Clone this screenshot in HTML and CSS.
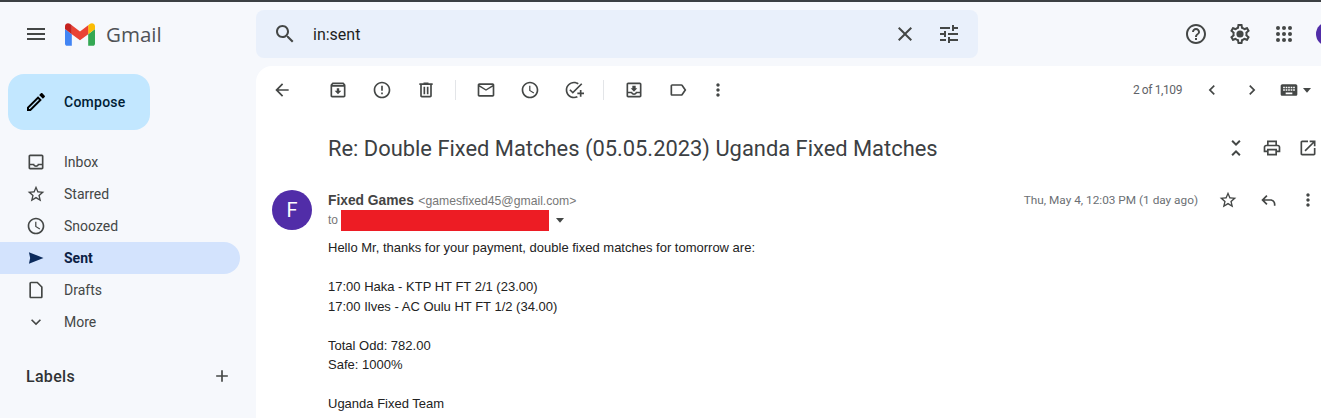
FILE: index.html
```html
<!DOCTYPE html>
<html lang="en">
    <head>
        <meta charset="UTF-8" />
        <meta name="viewport" content="width=device-width, initial-scale=1.0" />
        <title>Gmail</title>
        <link rel="stylesheet" href="styles.css">
    </head>
    <body>
        <svg class="sprite">
            <symbol id="i-menu" viewBox="0 0 24 24"><path d="M3 18h18v-2H3v2zm0-5h18v-2H3v2zm0-7v2h18V6H3z"/></symbol>
            <symbol id="i-search" viewBox="0 0 24 24"><path d="M15.5 14h-.79l-.28-.27C15.41 12.59 16 11.11 16 9.5 16 5.91 13.09 3 9.5 3S3 5.91 3 9.5 5.91 16 9.5 16c1.61 0 3.09-.59 4.23-1.57l.27.28v.79l5 4.99L20.49 19l-4.99-5zm-6 0C7.01 14 5 11.99 5 9.5S7.01 5 9.5 5 14 7.01 14 9.5 11.99 14 9.5 14z"/></symbol>
            <symbol id="i-close" viewBox="0 0 24 24"><path d="M19 6.41L17.59 5 12 10.59 6.41 5 5 6.41 10.59 12 5 17.59 6.41 19 12 13.41 17.59 19 19 17.59 13.41 12z"/></symbol>
            <symbol id="i-tune" viewBox="0 0 24 24"><path d="M3 17v2h6v-2H3zM3 5v2h10V5H3zm10 16v-2h8v-2h-8v-2h-2v6h2zM7 9v2H3v2h4v2h2V9H7zm14 4v-2H11v2h10zm-6-4h2V7h4V5h-4V3h-2v6z"/></symbol>
            <symbol id="i-help" viewBox="0 0 24 24"><path d="M11 18h2v-2h-2v2zm1-16C6.48 2 2 6.48 2 12s4.48 10 10 10 10-4.48 10-10S17.52 2 12 2zm0 18c-4.41 0-8-3.59-8-8s3.59-8 8-8 8 3.59 8 8-3.59 8-8 8zm0-14c-2.21 0-4 1.79-4 4h2c0-1.1.9-2 2-2s2 .9 2 2c0 2-3 1.75-3 5h2c0-2.25 3-2.5 3-5 0-2.21-1.79-4-4-4z"/></symbol>
            <symbol id="i-settings" viewBox="0 0 24 24"><path d="M19.43 12.98c.04-.32.07-.64.07-.98 0-.34-.03-.66-.07-.98l2.11-1.65c.19-.15.24-.42.12-.64l-2-3.46c-.09-.16-.26-.25-.44-.25-.06 0-.12.01-.17.03l-2.49 1c-.52-.4-1.08-.73-1.69-.98l-.38-2.65C14.46 2.18 14.25 2 14 2h-4c-.25 0-.46.18-.49.42l-.38 2.65c-.61.25-1.17.59-1.69.98l-2.49-1c-.06-.02-.12-.03-.18-.03-.17 0-.34.09-.43.25l-2 3.46c-.13.22-.07.49.12.64l2.11 1.65c-.04.32-.07.65-.07.98 0 .33.03.66.07.98l-2.11 1.65c-.19.15-.24.42-.12.64l2 3.46c.09.16.26.25.44.25.06 0 .12-.01.17-.03l2.49-1c.52.4 1.08.73 1.69.98l.38 2.65c.03.24.24.42.49.42h4c.25 0 .46-.18.49-.42l.38-2.65c.61-.25 1.17-.59 1.69-.98l2.49 1c.06.02.12.03.18.03.17 0 .34-.09.43-.25l2-3.46c.12-.22.07-.49-.12-.64l-2.11-1.65zm-1.98-1.71c.04.31.05.52.05.73 0 .21-.02.43-.05.73l-.14 1.13.89.7 1.08.84-.7 1.21-1.27-.51-1.04-.42-.9.68c-.43.32-.84.56-1.25.73l-1.06.43-.16 1.13-.2 1.35h-1.4l-.19-1.35-.16-1.13-1.06-.43c-.43-.18-.83-.41-1.23-.71l-.91-.7-1.06.43-1.27.51-.7-1.21 1.08-.84.89-.7-.14-1.13c-.03-.31-.05-.54-.05-.74s.02-.43.05-.73l.14-1.13-.89-.7-1.08-.84.7-1.21 1.27.51 1.04.42.9-.68c.43-.32.84-.56 1.25-.73l1.06-.43.16-1.13.2-1.35h1.39l.19 1.35.16 1.13 1.06.43c.43.18.83.41 1.23.71l.91.7 1.06-.43 1.27-.51.7 1.21-1.07.85-.89.7.14 1.13z"/><circle cx="12" cy="12" r="3.6"/></symbol>
            <symbol id="i-apps" viewBox="0 0 24 24"><circle cx="6" cy="6" r="2"/><circle cx="12" cy="6" r="2"/><circle cx="18" cy="6" r="2"/><circle cx="6" cy="12" r="2"/><circle cx="12" cy="12" r="2"/><circle cx="18" cy="12" r="2"/><circle cx="6" cy="18" r="2"/><circle cx="12" cy="18" r="2"/><circle cx="18" cy="18" r="2"/></symbol>
            <symbol id="i-edit" viewBox="0 0 24 24"><path d="M3 17.25V21h3.75L17.81 9.94l-3.75-3.75L3 17.25zM5.92 19H5v-.92l9.06-9.06.92.92L5.92 19zM20.71 7.04c.39-.39.39-1.02 0-1.41l-2.34-2.34c-.2-.2-.45-.29-.71-.29s-.51.09-.7.28l-1.83 1.83 3.75 3.75 1.83-1.82z"/></symbol>
            <symbol id="i-inbox" viewBox="0 0 24 24"><path d="M19 3H5c-1.1 0-2 .9-2 2v14c0 1.1.9 2 2 2h14c1.1 0 2-.9 2-2V5c0-1.1-.9-2-2-2zm0 16H5v-3h3.56c.69 1.19 1.97 2 3.45 2s2.75-.81 3.45-2H19v3zm0-5h-4.99c0 1.1-.9 2-2 2s-2-.9-2-2H5V5h14v9z"/></symbol>
            <symbol id="i-star" viewBox="0 0 24 24"><path d="M22 9.24l-7.19-.62L12 2 9.19 8.63 2 9.24l5.46 4.73L5.82 21 12 17.27 18.18 21l-1.63-7.03L22 9.24zM12 15.4l-3.76 2.27 1-4.28-3.32-2.88 4.38-.38L12 6.1l1.71 4.04 4.38.38-3.32 2.88 1 4.28L12 15.4z"/></symbol>
            <symbol id="i-clock" viewBox="0 0 24 24"><path d="M11.99 2C6.47 2 2 6.48 2 12s4.47 10 9.99 10C17.52 22 22 17.52 22 12S17.52 2 11.99 2zM12 20c-4.42 0-8-3.58-8-8s3.58-8 8-8 8 3.58 8 8-3.58 8-8 8zm.5-13H11v6l5.25 3.15.75-1.23-4.5-2.67z"/></symbol>
            <symbol id="i-send" viewBox="0 0 24 24"><path d="M3.5 19L21 12 3.5 5l1.5 7z"/></symbol>
            <symbol id="i-draft" viewBox="0 0 24 24"><path d="M14 2H6c-1.1 0-2 .9-2 2v16c0 1.1.9 2 2 2h12c1.1 0 2-.9 2-2V8l-6-6zm4 18H6V4h7.17L18 8.83V20z"/></symbol>
            <symbol id="i-down" viewBox="0 0 24 24"><path d="M16.59 8.59L12 13.17 7.41 8.59 6 10l6 6 6-6z"/></symbol>
            <symbol id="i-add" viewBox="0 0 24 24"><path d="M19 13h-6v6h-2v-6H5v-2h6V5h2v6h6v2z"/></symbol>
            <symbol id="i-back" viewBox="0 0 24 24"><path d="M20 11H7.83l5.59-5.59L12 4l-8 8 8 8 1.41-1.41L7.83 13H20v-2z"/></symbol>
            <symbol id="i-archive" viewBox="0 0 24 24"><path d="M20.54 5.23l-1.39-1.68C18.88 3.21 18.47 3 18 3H6c-.47 0-.88.21-1.16.55L3.46 5.23C3.17 5.57 3 6.02 3 6.5V19c0 1.1.9 2 2 2h14c1.1 0 2-.9 2-2V6.5c0-.48-.17-.93-.46-1.27zM6.24 5h11.52l.81.97H5.44l.8-.97zM5 19V8h14v11H5zm8.45-9h-2.9v3H8l4 4 4-4h-2.55z"/></symbol>
            <symbol id="i-report" viewBox="0 0 24 24"><path d="M11 15h2v2h-2zm0-8h2v6h-2zm.99-5C6.47 2 2 6.48 2 12s4.47 10 9.99 10C17.52 22 22 17.52 22 12S17.52 2 11.99 2zM12 20c-4.42 0-8-3.58-8-8s3.58-8 8-8 8 3.58 8 8-3.58 8-8 8z"/></symbol>
            <symbol id="i-delete" viewBox="0 0 24 24"><path d="M15 4V3H9v1H4v2h1v13c0 1.1.9 2 2 2h10c1.1 0 2-.9 2-2V6h1V4h-5zm2 15H7V6h10v13zM9 8h2v9H9zm4 0h2v9h-2z"/></symbol>
            <symbol id="i-mail" viewBox="0 0 24 24"><path d="M20 4H4c-1.1 0-2 .9-2 2v12c0 1.1.9 2 2 2h16c1.1 0 2-.9 2-2V6c0-1.1-.9-2-2-2zm0 14H4V8l8 5 8-5v10zm-8-7L4 6h16l-8 5z"/></symbol>
            <symbol id="i-task" viewBox="0 0 24 24"><path d="M22 5.18L10.59 16.6l-4.24-4.24 1.41-1.41 2.83 2.83 10-10L22 5.18zM12 20c-4.41 0-8-3.59-8-8s3.59-8 8-8c1.57 0 3.04.46 4.28 1.25l1.45-1.45C16.1 2.67 14.13 2 12 2 6.48 2 2 6.48 2 12s4.48 10 10 10c1.73 0 3.36-.44 4.78-1.22l-1.5-1.5c-1 .46-2.11.72-3.28.72zm7-5h-3v2h3v3h2v-3h3v-2h-3v-3h-2v3z"/></symbol>
            <symbol id="i-move" viewBox="0 0 24 24"><path d="M19 3H4.99c-1.11 0-1.98.9-1.98 2L3 19c0 1.1.88 2 1.99 2H19c1.1 0 2-.9 2-2V5c0-1.1-.9-2-2-2zm0 16H5v-3h3.56c.69 1.19 1.97 2 3.45 2s2.75-.81 3.45-2H19v3zm0-5h-4.99c0 1.1-.9 2-2 2s-2-.9-2-2H5V5h14v9zm-3-4h-2V7h-4v3H8l4 4 4-4z"/></symbol>
            <symbol id="i-label" viewBox="0 0 24 24"><path d="M17.63 5.84C17.27 5.33 16.67 5 16 5L5 5.01C3.9 5.01 3 5.9 3 7v10c0 1.1.9 1.99 2 1.99L16 19c.67 0 1.27-.33 1.63-.84L22 12l-4.37-6.16zM16 17H5V7h11l3.55 5L16 17z"/></symbol>
            <symbol id="i-more" viewBox="0 0 24 24"><path d="M12 8c1.1 0 2-.9 2-2s-.9-2-2-2-2 .9-2 2 .9 2 2 2zm0 2c-1.1 0-2 .9-2 2s.9 2 2 2 2-.9 2-2-.9-2-2-2zm0 6c-1.1 0-2 .9-2 2s.9 2 2 2 2-.9 2-2-.9-2-2-2z"/></symbol>
            <symbol id="i-prev" viewBox="0 0 24 24"><path d="M15.41 7.41L14 6l-6 6 6 6 1.41-1.41L10.83 12z"/></symbol>
            <symbol id="i-next" viewBox="0 0 24 24"><path d="M10 6L8.59 7.41 13.17 12l-4.58 4.59L10 18l6-6z"/></symbol>
            <symbol id="i-keyboard" viewBox="0 0 24 24"><path d="M20 5H4c-1.1 0-2 .9-2 2v10c0 1.1.9 2 2 2h16c1.1 0 2-.9 2-2V7c0-1.1-.9-2-2-2zm-9 3h2v2h-2V8zm0 3h2v2h-2v-2zM8 8h2v2H8V8zm0 3h2v2H8v-2zm-1 2H5v-2h2v2zm0-3H5V8h2v2zm9 7H8v-2h8v2zm0-4h-2v-2h2v2zm0-3h-2V8h2v2zm3 3h-2v-2h2v2zm0-3h-2V8h2v2z"/></symbol>
            <symbol id="i-caret" viewBox="0 0 24 24"><path d="M6 9h12l-6 7z"/></symbol>
            <symbol id="i-unfold" viewBox="0 0 24 24"><path d="M7.41 18.59L8.83 20 12 16.83 15.17 20l1.41-1.41L12 14l-4.59 4.59zm9.18-13.18L15.17 4 12 7.17 8.83 4 7.41 5.41 12 10l4.59-4.59z"/></symbol>
            <symbol id="i-print" viewBox="0 0 24 24"><path d="M19 8h-1V3H6v5H5c-1.66 0-3 1.34-3 3v6h4v4h12v-4h4v-6c0-1.66-1.34-3-3-3zM8 5h8v3H8V5zm8 12v2H8v-4h8v2zm2-2v-2H6v2H4v-4c0-.55.45-1 1-1h14c.55 0 1 .45 1 1v4h-2z"/></symbol>
            <symbol id="i-open" viewBox="0 0 24 24"><path d="M19 19H5V5h7V3H5c-1.11 0-2 .9-2 2v14c0 1.1.89 2 2 2h14c1.1 0 2-.9 2-2v-7h-2v7zM14 3v2h3.59l-9.83 9.83 1.41 1.41L19 6.41V10h2V3h-7z"/></symbol>
            <symbol id="i-reply" viewBox="0 0 24 24"><path d="M21 19h-2v-2c0-2.2-1.8-4-4-4H7.83l3.58 3.59L10 18l-6-6 6-6 1.41 1.41L7.83 11H15c3.3 0 6 2.7 6 6v2z"/></symbol>
        </svg>

        <header class="topbar">
            <div class="brand">
                <svg class="icon icon-24 menu-icon"><use href="#i-menu" /></svg>
                <svg class="gmail-logo" viewBox="52 42 88 66">
                    <path fill="#4285f4" d="M58 108h14V74L52 59v43c0 3.32 2.69 6 6 6"/>
                    <path fill="#34a853" d="M120 108h14c3.32 0 6-2.69 6-6V59l-20 15"/>
                    <path fill="#fbbc04" d="M120 48v26l20-15v-8c0-7.42-8.47-11.65-14.4-7.2"/>
                    <path fill="#ea4335" d="M72 74V48l24 18 24-18v26L96 92"/>
                    <path fill="#c5221f" d="M52 51v8l20 15V48l-5.6-4.2c-5.94-4.45-14.4-.22-14.4 7.2"/>
                </svg>
                <span class="gmail-word">Gmail</span>
            </div>
            <div class="search">
                <svg class="icon icon-24"><use href="#i-search" /></svg>
                <span class="search-text">in:sent</span>
                <svg class="icon icon-24"><use href="#i-close" /></svg>
                <svg class="icon icon-24"><use href="#i-tune" /></svg>
            </div>
            <div class="top-actions">
                <svg class="icon icon-24"><use href="#i-help" /></svg>
                <svg class="icon icon-24"><use href="#i-settings" /></svg>
                <svg class="icon icon-24"><use href="#i-apps" /></svg>
                <span class="account"></span>
            </div>
        </header>

        <div class="layout">
            <aside class="sidebar">
                <div class="compose">
                    <svg class="icon icon-24 compose-icon"><use href="#i-edit" /></svg>
                    <span>Compose</span>
                </div>
                <nav class="nav">
                    <div class="nav-item"><svg class="icon icon-20"><use href="#i-inbox" /></svg>Inbox</div>
                    <div class="nav-item"><svg class="icon icon-20"><use href="#i-star" /></svg>Starred</div>
                    <div class="nav-item"><svg class="icon icon-20"><use href="#i-clock" /></svg>Snoozed</div>
                    <div class="nav-item active"><svg class="icon icon-20"><use href="#i-send" /></svg>Sent</div>
                    <div class="nav-item"><svg class="icon icon-20"><use href="#i-draft" /></svg>Drafts</div>
                    <div class="nav-item"><svg class="icon icon-20"><use href="#i-down" /></svg>More</div>
                </nav>
                <div class="labels">
                    <span>Labels</span>
                    <svg class="icon icon-20"><use href="#i-add" /></svg>
                </div>
            </aside>

            <main class="card">
                <div class="toolbar">
                    <svg class="icon icon-20 back-icon"><use href="#i-back" /></svg>
                    <div class="tool-group">
                        <svg class="icon icon-20"><use href="#i-archive" /></svg>
                        <svg class="icon icon-20"><use href="#i-report" /></svg>
                        <svg class="icon icon-20"><use href="#i-delete" /></svg>
                    </div>
                    <div class="tool-sep"></div>
                    <div class="tool-group">
                        <svg class="icon icon-20"><use href="#i-mail" /></svg>
                        <svg class="icon icon-20"><use href="#i-clock" /></svg>
                        <svg class="icon icon-20"><use href="#i-task" /></svg>
                    </div>
                    <div class="tool-sep"></div>
                    <div class="tool-group">
                        <svg class="icon icon-20"><use href="#i-move" /></svg>
                        <svg class="icon icon-20"><use href="#i-label" /></svg>
                        <svg class="icon icon-20 more-icon"><use href="#i-more" /></svg>
                    </div>
                    <div class="pager">
                        <span class="pager-text">2 of 1,109</span>
                        <svg class="icon icon-20"><use href="#i-prev" /></svg>
                        <svg class="icon icon-20"><use href="#i-next" /></svg>
                        <div class="keyboard">
                            <svg class="icon icon-20"><use href="#i-keyboard" /></svg>
                            <svg class="icon icon-16"><use href="#i-caret" /></svg>
                        </div>
                    </div>
                </div>

                <div class="subject-row">
                    <h2 class="subject">Re: Double Fixed Matches (05.05.2023) Uganda Fixed Matches</h2>
                    <div class="subject-actions">
                        <svg class="icon icon-24 unfold-icon"><use href="#i-unfold" /></svg>
                        <svg class="icon icon-20"><use href="#i-print" /></svg>
                        <svg class="icon icon-20"><use href="#i-open" /></svg>
                    </div>
                </div>

                <div class="message">
                    <div class="avatar">F</div>
                    <div class="message-main">
                        <div class="message-head">
                            <div class="sender">
                                <b class="sender-name">Fixed Games</b>
                                <span class="sender-mail">&lt;gamesfixed45@gmail.com&gt;</span>
                            </div>
                            <div class="message-meta">
                                <span class="date">Thu, May 4, 12:03 PM (1 day ago)</span>
                                <svg class="icon icon-20"><use href="#i-star" /></svg>
                                <svg class="icon icon-20"><use href="#i-reply" /></svg>
                                <svg class="icon icon-20"><use href="#i-more" /></svg>
                            </div>
                        </div>
                        <div class="to-row">
                            <span>to</span>
                            <span class="redacted"></span>
                            <svg class="icon icon-16"><use href="#i-caret" /></svg>
                        </div>
                        <div class="message-body">
                            <p>Hello Mr, thanks for your payment, double fixed matches for tomorrow are:</p>
                            <p>17:00 Haka - KTP HT FT 2/1 (23.00)<br>17:00 Ilves - AC Oulu HT FT 1/2 (34.00)</p>
                            <p>Total Odd: 782.00<br>Safe: 1000%</p>
                            <p>Uganda Fixed Team</p>
                        </div>
                    </div>
                </div>
            </main>
        </div>
    </body>
</html>
```

FILE: styles.css
```css
html {
    font-family: "Liberation Sans", Arial, sans-serif;
}

body {
    height: 418px;
    margin: 0;
    overflow: hidden;
    box-sizing: border-box;
    border-top: 2px solid #3c4043;
    background: #f6f8fc;
    color: #222;
}

.sprite {
    display: none;
}

.icon {
    flex: none;
    fill: #444746;
}

.icon-24 {
    width: 24px;
    height: 24px;
}

.icon-20 {
    width: 20px;
    height: 20px;
}

.icon-16 {
    width: 16px;
    height: 16px;
}

/* top bar */
.topbar {
    display: flex;
    align-items: center;
    height: 64px;
}

.brand {
    display: flex;
    align-items: center;
    width: 256px;
    flex: none;
    padding-left: 24px;
    box-sizing: border-box;
}

.gmail-logo {
    width: 30px;
    height: 23px;
    margin-left: 17px;
}

.gmail-word {
    margin-left: 11px;
    font-family: "Open Sans", sans-serif;
    font-size: 20.5px;
    color: #4f5256;
}

.search {
    display: flex;
    align-items: center;
    flex: none;
    gap: 20px;
    width: 722px;
    height: 48px;
    padding: 0 17px;
    box-sizing: border-box;
    border-radius: 8px;
    background: #e9f0fb;
}

.search-text {
    flex: 1;
    margin-left: -4px;
    font-family: Roboto, sans-serif;
    font-size: 16px;
    color: #1f1f1f;
}

.top-actions {
    display: flex;
    align-items: center;
    flex: none;
    gap: 20px;
    margin-left: 206px;
}

.account {
    flex: none;
    width: 24px;
    height: 24px;
    border-radius: 50%;
    background: #512da8;
}

/* left side */
.layout {
    display: flex;
    height: 352px;
}

.sidebar {
    width: 256px;
    flex: none;
}

.compose {
    display: flex;
    align-items: center;
    gap: 16px;
    width: 142px;
    height: 56px;
    margin: 8px 0 0 8px;
    padding-left: 16px;
    box-sizing: border-box;
    border-radius: 16px;
    background: #c2e7ff;
    font-family: Roboto, sans-serif;
    font-size: 14px;
    font-weight: 500;
    letter-spacing: 0.25px;
    color: #001d35;
}

.compose-icon {
    fill: #000;
}

.nav {
    display: flex;
    flex-direction: column;
    width: 240px;
    margin-top: 16px;
}

.nav-item {
    display: flex;
    align-items: center;
    gap: 18px;
    height: 32px;
    padding-left: 26px;
    border-radius: 0 16px 16px 0;
    font-family: Roboto, sans-serif;
    font-size: 14px;
    color: #444746;
}

.nav-item.active {
    background: #d3e3fd;
    font-weight: 700;
    color: #0b2145;
}

.nav-item.active .icon {
    fill: #0b2a5c;
}

.labels {
    display: flex;
    align-items: center;
    justify-content: space-between;
    width: 206px;
    margin-top: 28px;
    padding-left: 26px;
    font-family: Roboto, sans-serif;
    font-size: 16px;
    font-weight: 500;
    letter-spacing: 0.3px;
    color: #303335;
}

/* message card */
.card {
    flex: 1;
    min-width: 0;
    border-radius: 16px 0 0 0;
    background: #fff;
}

.toolbar {
    display: flex;
    align-items: center;
    height: 48px;
    padding: 0 6px 0 16px;
}

.back-icon {
    margin-right: 36px;
}

.tool-group {
    display: flex;
    gap: 24px;
}

.tool-sep {
    width: 1px;
    height: 20px;
    margin: 0 20px 0 19px;
    background: #e3e5e8;
}

.more-icon {
    margin-left: -4px;
}

.pager {
    display: flex;
    align-items: center;
    gap: 20px;
    margin-left: auto;
}

.pager-text {
    font-family: Roboto, sans-serif;
    font-size: 12px;
    letter-spacing: -0.4px;
    color: #5f6368;
}

.keyboard {
    display: flex;
    align-items: center;
    margin-left: -3px;
}

.subject-row {
    display: flex;
    align-items: center;
    justify-content: space-between;
    height: 56px;
    margin-top: 6px;
    padding: 0 3px 0 72px;
}

.subject {
    margin: 0;
    font-family: Roboto, sans-serif;
    font-size: 21.9px;
    font-weight: 400;
    color: #3c4043;
}

.subject-actions {
    display: flex;
    align-items: center;
    gap: 16px;
}

.unfold-icon {
    margin: 0 -2px;
}

.message {
    display: flex;
    gap: 16px;
    padding: 14px 3px 0 16px;
}

.avatar {
    display: flex;
    align-items: center;
    justify-content: center;
    flex: none;
    width: 40px;
    height: 40px;
    border-radius: 50%;
    background: #512da8;
    font-family: Roboto, sans-serif;
    font-size: 20px;
    color: #fff;
}

.message-main {
    flex: 1;
    min-width: 0;
}

.message-head {
    display: flex;
    align-items: center;
    justify-content: space-between;
    height: 20px;
}

.sender-name {
    font-size: 13.8px;
    color: #444;
}

.sender-mail {
    font-size: 12.2px;
    color: #777;
}

.message-meta {
    display: flex;
    align-items: center;
    gap: 20px;
}

.date {
    font-family: Roboto, sans-serif;
    font-size: 11.8px;
    color: #6b6f74;
}

.to-row {
    display: flex;
    align-items: center;
    height: 20px;
    font-size: 12px;
    color: #777;
}

.redacted {
    width: 208px;
    height: 21px;
    margin-left: 3px;
    background: #ed1c24;
}

.to-row .icon {
    margin-left: 3px;
}

.message-body {
    padding-top: 8px;
    font-size: 13px;
    line-height: 19.5px;
    color: #222;
}

.message-body p {
    margin: 0 0 19.5px;
}
```
